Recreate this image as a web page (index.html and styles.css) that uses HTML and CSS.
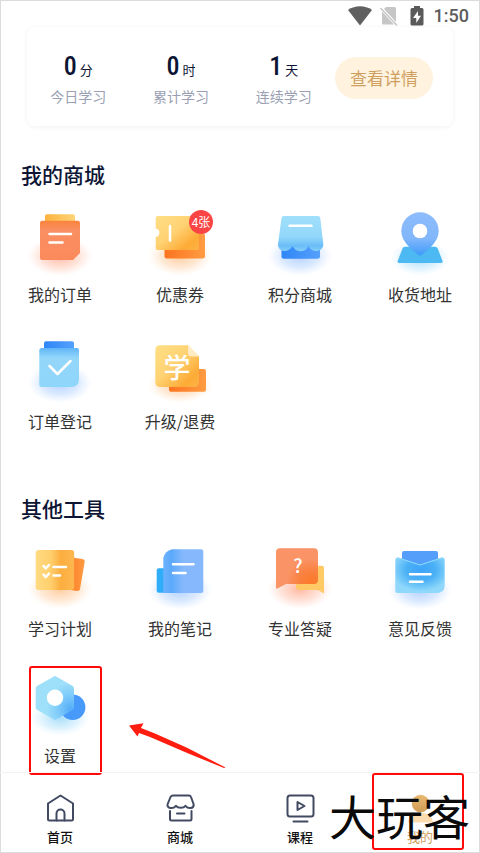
FILE: index.html
```html
<!DOCTYPE html>
<html lang="zh-CN">
<head>
  <meta charset="UTF-8" />
  <meta name="viewport" content="width=device-width, initial-scale=1" />
  <title>我的</title>
  <link rel="stylesheet" href="styles.css">
</head>
<body>
  <!-- shared gradients -->
  <svg class="defs" width="0" height="0" aria-hidden="true">
    <defs>
      <radialGradient id="glowRed"><stop offset="0" stop-color="#ff8a65" stop-opacity=".6"/><stop offset=".6" stop-color="#ff9a76" stop-opacity=".28"/><stop offset="1" stop-color="#ffb199" stop-opacity="0"/></radialGradient>
      <radialGradient id="glowOrange"><stop offset="0" stop-color="#ffab5e" stop-opacity=".6"/><stop offset=".6" stop-color="#ffb36e" stop-opacity=".28"/><stop offset="1" stop-color="#ffcf9e" stop-opacity="0"/></radialGradient>
      <radialGradient id="glowBlue"><stop offset="0" stop-color="#7fb0ff" stop-opacity=".6"/><stop offset=".6" stop-color="#8fbcff" stop-opacity=".3"/><stop offset="1" stop-color="#b5d3ff" stop-opacity="0"/></radialGradient>
      <radialGradient id="glowCyan"><stop offset="0" stop-color="#6cc8f5" stop-opacity=".6"/><stop offset=".6" stop-color="#8ad3f8" stop-opacity=".28"/><stop offset="1" stop-color="#b5e3ff" stop-opacity="0"/></radialGradient>
      <linearGradient id="red" x1="0" y1="0" x2="0" y2="1"><stop offset="0" stop-color="#f9843e"/><stop offset=".25" stop-color="#f98f62"/><stop offset="1" stop-color="#fb8a5c"/></linearGradient>
      <linearGradient id="yellow" x1="0" y1="0" x2="1" y2="1"><stop offset="0" stop-color="#ffdf85"/><stop offset=".45" stop-color="#ffd273"/><stop offset=".8" stop-color="#fdab36"/><stop offset="1" stop-color="#fdb347"/></linearGradient>
      <linearGradient id="orange" x1="0" y1="0" x2="1" y2="0"><stop offset="0" stop-color="#fd7420"/><stop offset="1" stop-color="#ff9c42"/></linearGradient>
      <linearGradient id="tabYellow" x1="0" y1="0" x2="1" y2="0"><stop offset="0" stop-color="#fdb23c"/><stop offset="1" stop-color="#ffd579"/></linearGradient>
      <linearGradient id="sky" x1="0" y1="0" x2="0" y2="1"><stop offset="0" stop-color="#a0e0fb"/><stop offset=".6" stop-color="#92d6fa"/><stop offset=".85" stop-color="#69bdf8"/><stop offset="1" stop-color="#85cefa"/></linearGradient>
      <linearGradient id="skyTop" x1="0" y1="0" x2="0" y2="1"><stop offset="0" stop-color="#5fb5f8"/><stop offset=".25" stop-color="#93d6fa"/><stop offset="1" stop-color="#8fd6fb"/></linearGradient>
      <linearGradient id="blue" x1="0" y1="0" x2="1" y2="0"><stop offset="0" stop-color="#2f86f6"/><stop offset="1" stop-color="#55a0fb"/></linearGradient>
      <linearGradient id="pin" x1="0" y1="0" x2="0" y2="1"><stop offset="0" stop-color="#8dbcfc"/><stop offset=".6" stop-color="#82b7fb"/><stop offset="1" stop-color="#3f9bfa"/></linearGradient>
      <linearGradient id="note" x1="0" y1="0" x2="1" y2="0"><stop offset="0" stop-color="#6db2fd"/><stop offset=".2" stop-color="#5ba9fc"/><stop offset=".5" stop-color="#85b8fc"/><stop offset="1" stop-color="#85b8fd"/></linearGradient>
      <linearGradient id="plan" x1="0" y1="0" x2="1" y2="0"><stop offset="0" stop-color="#ffdb83"/><stop offset=".4" stop-color="#ffce6c"/><stop offset=".65" stop-color="#fcae3f"/><stop offset="1" stop-color="#fdb74f"/></linearGradient>
      <radialGradient id="chat" cx=".85" cy=".85" r=".6"><stop offset="0" stop-color="#fa7a28"/><stop offset=".5" stop-color="#fa8140"/><stop offset="1" stop-color="#fa9365"/></radialGradient>
      <radialGradient id="mail" cx=".52" cy=".35" r=".6"><stop offset="0" stop-color="#3da3f8"/><stop offset=".5" stop-color="#4bb1f6"/><stop offset="1" stop-color="#8fd8fb"/></radialGradient>
      <radialGradient id="hex" cx=".9" cy=".75" r=".6"><stop offset="0" stop-color="#55adf8"/><stop offset=".5" stop-color="#7cc9fa"/><stop offset="1" stop-color="#9edffa"/></radialGradient>
      <linearGradient id="gold" x1="0" y1="0" x2="0" y2="1"><stop offset="0" stop-color="#e9ba72"/><stop offset="1" stop-color="#cf9c56"/></linearGradient>
    </defs>
  </svg>

  <div class="page">
    <header class="status">
      <svg width="24" height="20" viewBox="0 0 24 20"><path d="M0 4C7-1 17-1 24 4L12 19.500Z" fill="#606060"/></svg>
      <svg width="18" height="20" viewBox="0 0 18 20"><path d="M6 1H14.500Q16 1 16 2.500V16L4 3Z" fill="#c6c6c6"/><path d="M2 5.500L14 18.500H3.500Q2 18.500 2 17Z" fill="#c6c6c6"/><path d="M0.500 2L17 19.500" stroke="#c6c6c6" stroke-width="1.500"/></svg>
      <svg width="14" height="20" viewBox="0 0 14 20"><path d="M4 0H10V2H12Q13.500 2 13.500 3.500V18Q13.500 19.500 12 19.500H2Q.5 19.500.5 18V3.500Q.5 2 2 2H4Z" fill="#5a5a5a"/><path d="M8 5L3 12H6.300V17L11 9.800H8Z" fill="#fff"/></svg>
      <span class="time">1:50</span>
    </header>

    <div class="study-card">
      <div class="stat">
        <p class="num"><b>0</b><span>分</span></p>
        <p class="desc">今日学习</p>
      </div>
      <div class="stat">
        <p class="num"><b>0</b><span>时</span></p>
        <p class="desc">累计学习</p>
      </div>
      <div class="stat">
        <p class="num"><b>1</b><span>天</span></p>
        <p class="desc">连续学习</p>
      </div>
      <button class="detail">查看详情</button>
    </div>

    <main>
      <section>
        <h2>我的商城</h2>
        <div class="grid">
          <a class="item" href="#">
            <svg class="icon" viewBox="0 0 64 64">
              <ellipse cx="32" cy="44" rx="32" ry="20" fill="url(#glowRed)"/>
              <rect x="17" y="2.300" width="30" height="12" rx="2" fill="url(#tabYellow)"/>
              <path d="M14 8.700H50Q52 8.700 52 11V41L45 48H14Q12 48 12 46V11Q12 8.700 14 8.700Z" fill="url(#red)"/>
              <path d="M21.500 22H43M21.500 30.500H34.500" class="line"/>
            </svg>
            <span>我的订单</span>
          </a>
          <a class="item" href="#">
            <svg class="icon" viewBox="0 0 64 64">
              <ellipse cx="32" cy="44" rx="32" ry="20" fill="url(#glowOrange)"/>
              <rect x="16.500" y="21.500" width="40.500" height="25" rx="2" fill="url(#orange)"/>
              <path d="M10 4H49Q51 4 51 6V36Q51 38 49 38H10Q7.700 38 7.700 36V25A4.300 4.300 0 0 0 7.700 16.500V6Q7.700 4 10 4Z" fill="url(#yellow)"/>
              <path d="M22 14V28.500" class="line"/>
            </svg>
            <em class="badge">4张</em>
            <span>优惠券</span>
          </a>
          <a class="item" href="#">
            <svg class="icon" viewBox="0 0 64 64">
              <ellipse cx="32" cy="44" rx="32" ry="20" fill="url(#glowBlue)"/>
              <rect x="13.500" y="30" width="38.500" height="16.700" rx="2.500" fill="url(#blue)"/>
              <path d="M16 4H50Q52 4 52.300 6L55.300 32C55.500 41 43 41 40.500 34C38 41 27.500 41 24.500 34C21 41 10 41 10 32L13.500 6Q14 4 16 4Z" fill="url(#sky)"/>
              <path d="M21.500 13.700H43.500" class="line"/>
            </svg>
            <span>积分商城</span>
          </a>
          <a class="item" href="#">
            <svg class="icon" viewBox="0 0 64 64">
              <ellipse cx="32" cy="46" rx="30" ry="18" fill="url(#glowCyan)"/>
              <path d="M17 34.700H47Q49 34.700 49.700 36.500L54.500 49Q55 51 53 51H11.500Q9 51 9.700 49L14.500 36.500Q15 34.700 17 34.700Z" fill="#4cb9f2"/>
              <path d="M32 .3A18.700 18.700 0 0 1 50.700 19C50.700 29 42 36 34.500 42.500Q32 44.500 29.500 42.500C22 36 13.300 29 13.300 19A18.700 18.700 0 0 1 32 .3Z" fill="url(#pin)"/>
              <circle cx="32" cy="19" r="7.300" fill="#fff"/>
            </svg>
            <span>收货地址</span>
          </a>
          <a class="item" href="#">
            <svg class="icon" viewBox="0 0 64 64">
              <ellipse cx="32" cy="44" rx="32" ry="20" fill="url(#glowBlue)"/>
              <rect x="16" y="2.300" width="30" height="12" rx="2" fill="url(#blue)"/>
              <path d="M14 9H49Q51 9 51 11V40Q51 48 43 48H14Q11.300 48 11.300 46V11Q11.300 9 14 9Z" fill="url(#skyTop)"/>
              <path d="M21.500 27L29.500 35L42.500 22" class="line"/>
            </svg>
            <span>订单登记</span>
          </a>
          <a class="item" href="#">
            <svg class="icon" viewBox="0 0 64 64">
              <ellipse cx="32" cy="46" rx="32" ry="18" fill="url(#glowOrange)"/>
              <rect x="21" y="30" width="37" height="22.700" rx="2" fill="url(#orange)"/>
              <path d="M12 6.300H40L51 17.500V43Q51 48 46 48H12Q7.300 48 7.300 43V11Q7.300 6.300 12 6.300Z" fill="url(#yellow)"/>
              <path d="M40 6.300V14Q40 17.500 43.500 17.500H51Z" fill="#ffecc4"/>
              <text x="29" y="39" class="glyph" font-size="27">学</text>
            </svg>
            <span>升级/退费</span>
          </a>
        </div>
      </section>

      <section>
        <h2>其他工具</h2>
        <div class="grid">
          <a class="item" href="#">
            <svg class="icon" viewBox="0 0 64 64">
              <ellipse cx="32" cy="43" rx="32" ry="20" fill="url(#glowOrange)"/>
              <path d="M40 11L54.500 13Q57 13.500 56.700 16L52 43Q51.500 45.500 49 45L36 43Z" fill="url(#orange)"/>
              <rect x="7.700" y="4" width="38.500" height="40" rx="3" fill="url(#plan)"/>
              <path d="M15.500 20L17.800 22.300L21 19M25.500 21H38M15.500 28.700L17.800 31L21 27.700M25.500 29.500H32" class="line"/>
            </svg>
            <span>学习计划</span>
          </a>
          <a class="item" href="#">
            <svg class="icon" viewBox="0 0 64 64">
              <ellipse cx="32" cy="44" rx="32" ry="20" fill="url(#glowBlue)"/>
              <rect x="8.700" y="22.300" width="20" height="24.400" rx="2" fill="#2fadf8"/>
              <path d="M24 3.300H53Q55.300 3.300 55.300 5.500V45Q55.300 47 53 47H17.500Q15.300 47 15.300 45V12Q17 5 24 3.300Z" fill="url(#note)"/>
              <path d="M25 18.300H45.500M25 27H37.500" class="line"/>
            </svg>
            <span>我的笔记</span>
          </a>
          <a class="item" href="#">
            <svg class="icon" viewBox="0 0 64 64">
              <ellipse cx="32" cy="43" rx="32" ry="20" fill="url(#glowRed)"/>
              <path d="M31 19.700H54Q56 19.700 56 22V47.500L50 44H31Q28 44 28 41V22Q28 19.700 31 19.700Z" fill="#ffc966"/>
              <path d="M12 2.300H46Q50 2.300 50 6.500V34Q50 38 46 38H18L9.500 42.500Q8 43 8 41.500V6.500Q8 2.300 12 2.300Z" fill="url(#chat)"/>
              <text x="30" y="27" class="glyph" font-size="19">?</text>
            </svg>
            <span>专业答疑</span>
          </a>
          <a class="item" href="#">
            <svg class="icon" viewBox="0 0 64 64">
              <ellipse cx="32" cy="44" rx="32" ry="20" fill="url(#glowBlue)"/>
              <rect x="14" y="5" width="36" height="20" rx="2" fill="#559ffa"/>
              <path d="M10 11.700L32 19L54 11.700Q56.700 11.200 56.700 14V39Q56.700 47 48.500 47H10Q7.300 47 7.300 44.500V14Q7.300 11.200 10 11.700Z" fill="url(#mail)"/>
              <path d="M10 11.700L32 19L54 11.700" fill="none" stroke="#8fdcfc" stroke-width="1"/>
              <path d="M22 28.300H42.500M22 35.700H34.500" class="line"/>
            </svg>
            <span>意见反馈</span>
          </a>
          <a class="item" href="#">
            <svg class="icon" viewBox="0 0 64 64">
              <ellipse cx="32" cy="45" rx="30" ry="18" fill="url(#glowCyan)"/>
              <circle cx="44.700" cy="34.300" r="12.700" fill="#489afa"/>
              <path d="M25.500 3.700Q27 2.500 28.500 3.700L44.700 13Q46 14 46 15.500V34Q46 36 44.700 36.700L28.500 46.200Q27 47.200 25.500 46.200L9 36.700Q7.700 36 7.700 34V15.500Q7.700 14 9 13Z" fill="url(#hex)"/>
              <circle cx="27" cy="24.700" r="8.200" fill="#fff"/>
            </svg>
            <span>设置</span>
            <i class="mark mark-settings"></i>
            <svg class="arrow" viewBox="0 0 98 46"><path d="M1 3.500L15.500 1.200L13 6L27 11.500L58.500 25.500L97.500 45.500L96 46L58 30.500L22 15L11 11L9.500 14.500Z" fill="#ff1d10"/></svg>
          </a>
        </div>
      </section>
    </main>

    <nav class="tabbar">
      <a href="#">
        <svg class="tab-icon" viewBox="0 0 30 30"><path d="M3 10.500L15.500 2.500L28 10.500V26Q28 27.500 26.500 27.500H4.500Q3 27.500 3 26Z"/><path d="M11.500 27.500V20.500A4 4 0 0 1 19.500 20.500V27.500"/></svg>
        <span>首页</span>
      </a>
      <a href="#">
        <svg class="tab-icon" viewBox="0 0 30 30"><path d="M8 2.500H24Q25.500 2.500 26 4L28.700 11.500C29 16 23 16 20.500 12.800C18.500 15.500 13 15.500 11 12.800C8.500 16 2 16 2.500 11.500L5.500 4Q6.500 2.500 8 2.500Z"/><path d="M5 18V26Q5 27.500 6.500 27.500H25Q26.500 27.500 26.500 26V18M12 20.500H19.500"/></svg>
        <span>商城</span>
      </a>
      <a href="#">
        <svg class="tab-icon" viewBox="0 0 30 30"><rect x="2.500" y="2.500" width="26" height="21" rx="2.500"/><path d="M12.500 9V17L19.500 13ZM8.500 28.500H22.500"/></svg>
        <span>课程</span>
      </a>
      <a href="#" class="active">
        <svg class="tab-icon" viewBox="0 0 30 30"><path d="M3 29.500C4 16 27 16 28 29.500Z" fill="#fbdcae"/><circle cx="15.500" cy="10.500" r="8.700" fill="url(#gold)"/></svg>
        <span>我的</span>
        <i class="mark mark-mine"></i>
      </a>
      <strong class="watermark">大玩客</strong>
    </nav>
  </div>
</body>
</html>
```
FILE: styles.css
```css
* {
  box-sizing: border-box;
}
body {
  margin: 0;
  background: #fff;
  color: #333;
  font-family: "Noto Sans CJK SC", sans-serif;
}
p, h2 {
  margin: 0;
}
a {
  color: inherit;
  text-decoration: none;
}
.defs {
  position: absolute;
}
.page {
  display: flex;
  flex-direction: column;
  min-height: 100vh;
  outline: 1px solid #dcdcdc;
  outline-offset: -1px;
}

/* status bar */
.status {
  display: flex;
  justify-content: flex-end;
  align-items: center;
  height: 27px;
  padding: 5px 11px 0 0;
}
.status svg:nth-child(2) {
  margin: 0 12px 0 8px;
}
.time {
  margin-left: 10px;
  font: 500 18px/22px Roboto, sans-serif;
  color: #5c5c5c;
}

/* study card */
.study-card {
  display: flex;
  align-items: center;
  height: 99px;
  margin: 0 27px;
  padding: 2px 20px 0 0;
  border-radius: 8px;
  box-shadow: 0 1px 5px rgba(0, 0, 0, 0.06);
}
.stat {
  flex: 1;
  text-align: center;
}
.num {
  display: flex;
  justify-content: center;
  align-items: baseline;
  gap: 3px;
  height: 32px;
  line-height: 32px;
  color: #0d1535;
}
.num b {
  font-family: "Roboto Condensed", Roboto, sans-serif;
  font-size: 26px;
  font-weight: 500;
}
.num span {
  font-size: 13px;
}
.desc {
  margin-top: 4px;
  font-size: 14px;
  line-height: 20px;
  color: #9a9fb3;
}
.detail {
  width: 98px;
  height: 42px;
  padding: 0;
  border: none;
  border-radius: 21px;
  background: #fff3e0;
  color: #cf9f5f;
  font-family: inherit;
  font-size: 17px;
  cursor: pointer;
}

/* menus */
main {
  flex: 1;
  padding: 33px 0 5px;
}
section + section {
  margin-top: 60px;
}
h2 {
  padding-left: 21px;
  font-size: 21px;
  font-weight: 500;
  line-height: 30px;
  color: #0d1535;
}
.grid {
  display: grid;
  grid-template-columns: repeat(4, 1fr);
  row-gap: 33px;
  margin-top: 23px;
}
.item {
  position: relative;
  display: flex;
  flex-direction: column;
  align-items: center;
  gap: 6px;
  font-size: 16px;
  line-height: 24px;
}
.icon {
  width: 64px;
  height: 64px;
}
.line {
  fill: none;
  stroke: #fff;
  stroke-width: 2.5;
  stroke-linecap: round;
  stroke-linejoin: round;
}
.glyph {
  fill: #fff;
  font-weight: 500;
  text-anchor: middle;
}
.badge {
  position: absolute;
  top: -2px;
  left: calc(50% + 9px);
  width: 24px;
  height: 24px;
  border-radius: 50%;
  background: #fb4444;
  color: #fff;
  font-size: 12px;
  font-style: normal;
  text-align: center;
}

/* highlights */
.mark {
  position: absolute;
  border: 2px solid #ff0a0a;
  border-radius: 3px;
}
.mark-settings {
  top: -7px;
  left: calc(50% - 31px);
  width: 73px;
  height: 109px;
}
.mark-mine {
  top: 0;
  left: calc(50% - 48px);
  width: 92px;
  height: 77px;
}
.arrow {
  position: absolute;
  top: 49px;
  left: calc(50% + 68px);
  width: 98px;
  height: 46px;
}

/* bottom tabs */
.tabbar {
  position: relative;
  display: grid;
  grid-template-columns: repeat(4, 1fr);
  border-top: 1px solid #f3f3f3;
}
.tabbar a {
  position: relative;
  display: flex;
  flex-direction: column;
  align-items: center;
  gap: 5px;
  padding: 20px 0 7px;
  font-size: 13px;
  font-weight: 500;
  line-height: 18px;
  color: #111;
}
.tabbar .active {
  color: #d3a262;
  font-weight: 400;
}
.tab-icon {
  width: 30px;
  height: 30px;
  fill: none;
  stroke: #424a62;
  stroke-width: 2;
  stroke-linecap: round;
  stroke-linejoin: round;
}
.active .tab-icon {
  stroke: none;
}
.watermark {
  position: absolute;
  top: 10px;
  right: 10px;
  font-size: 47px;
  font-weight: 400;
  line-height: 64px;
  color: #0a0a0a;
}
```
